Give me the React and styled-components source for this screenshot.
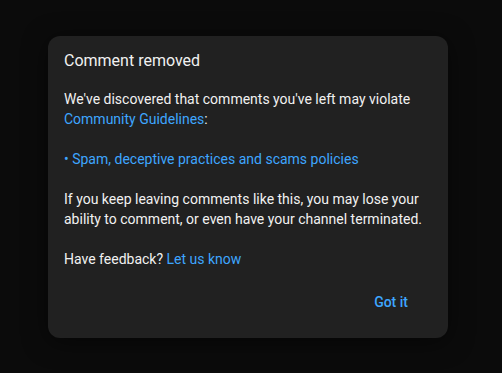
import React from "react";
import styled, { createGlobalStyle } from "styled-components";

const GlobalStyle = createGlobalStyle`
  html, body {
    margin: 0;
    padding: 0;
    background: #0b0b0b;
  }
  body {
    font-family: Roboto, "Liberation Sans", Arial, sans-serif;
    -webkit-font-smoothing: antialiased;
  }
`;

const Page = styled.div`
  width: 502px;
  height: 373px;
  display: flex;
  align-items: flex-start;
  padding: 36px 0 0 48px;
  box-sizing: border-box;
  background: #0b0b0b;
`;

const Dialog = styled.div`
  width: 400px;
  height: 302px;
  box-sizing: border-box;
  background: #212121;
  border-radius: 12px;
  display: flex;
  flex-direction: column;
  padding: 14px 16px 18px;
  box-shadow: 0 4px 24px rgba(0, 0, 0, 0.5);
`;

const Title = styled.h2`
  margin: 0;
  font-size: 16px;
  line-height: 22px;
  font-weight: 400;
  color: #f1f1f1;
`;

const Body = styled.div`
  margin-top: 17px;
  display: flex;
  flex-direction: column;
  gap: 20px;
`;

const Text = styled.p`
  margin: 0;
  font-size: 14px;
  line-height: 20px;
  font-weight: 400;
  color: #f1f1f1;
`;

const Link = styled.a`
  color: #3ea6ff;
  text-decoration: none;
  cursor: pointer;
`;

const Actions = styled.div`
  margin-top: auto;
  display: flex;
  justify-content: flex-end;
  padding-right: 8px;
`;

const TextButton = styled.button`
  height: 36px;
  padding: 0 16px;
  border: none;
  border-radius: 18px;
  background: transparent;
  color: #3ea6ff;
  font-family: inherit;
  font-size: 14px;
  font-weight: 500;
  line-height: 36px;
  cursor: pointer;
`;

export default function App() {
  return (
    <>
      <GlobalStyle />
      <Page>
        <Dialog>
          <Title>Comment removed</Title>
          <Body>
            <Text>
              We've discovered that comments you've left may violate{" "}
              <Link>Community Guidelines</Link>:
            </Text>
            <Text>
              <Link>• Spam, deceptive practices and scams policies</Link>
            </Text>
            <Text>
              If you keep leaving comments like this, you may lose your ability
              to comment, or even have your channel terminated.
            </Text>
            <Text>
              Have feedback? <Link>Let us know</Link>
            </Text>
          </Body>
          <Actions>
            <TextButton>Got it</TextButton>
          </Actions>
        </Dialog>
      </Page>
    </>
  );
}
